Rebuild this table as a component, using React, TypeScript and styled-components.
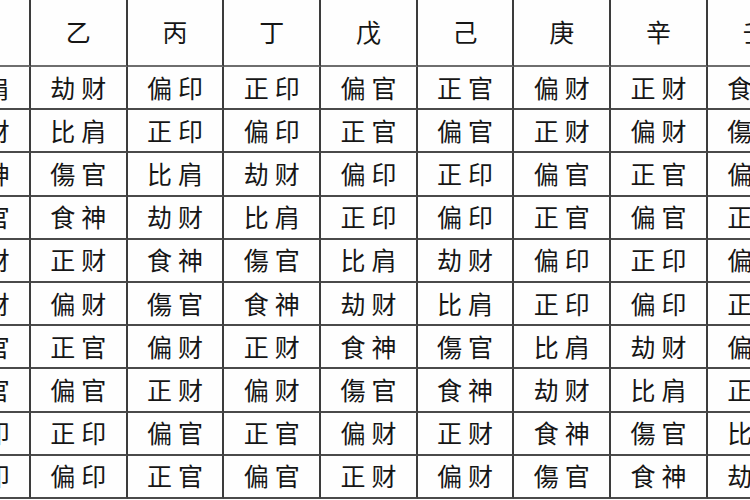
import * as React from "react";
import styled, { createGlobalStyle } from "styled-components";

const stems = ["甲", "乙", "丙", "丁", "戊", "己", "庚", "辛", "壬", "癸"];

// rows: other stem, columns: day stem
const gods: string[][] = [
  ["比肩", "劫财", "偏印", "正印", "偏官", "正官", "偏财", "正财", "食神", "傷官"],
  ["劫财", "比肩", "正印", "偏印", "正官", "偏官", "正财", "偏财", "傷官", "食神"],
  ["食神", "傷官", "比肩", "劫财", "偏印", "正印", "偏官", "正官", "偏财", "正财"],
  ["傷官", "食神", "劫财", "比肩", "正印", "偏印", "正官", "偏官", "正财", "偏财"],
  ["偏财", "正财", "食神", "傷官", "比肩", "劫财", "偏印", "正印", "偏官", "正官"],
  ["正财", "偏财", "傷官", "食神", "劫财", "比肩", "正印", "偏印", "正官", "偏官"],
  ["偏官", "正官", "偏财", "正财", "食神", "傷官", "比肩", "劫财", "偏印", "正印"],
  ["正官", "偏官", "正财", "偏财", "傷官", "食神", "劫财", "比肩", "正印", "偏印"],
  ["偏印", "正印", "偏官", "正官", "偏财", "正财", "食神", "傷官", "比肩", "劫财"],
  ["正印", "偏印", "正官", "偏官", "正财", "偏财", "傷官", "食神", "劫财", "比肩"],
];

const GlobalStyle = createGlobalStyle`
  html, body {
    margin: 0;
    padding: 0;
    background: #ffffff;
  }
  body {
    width: 750px;
    height: 500px;
    overflow: hidden;
    font-family: "Noto Sans CJK SC", "Noto Sans CJK TC", sans-serif;
  }
`;

const Viewport = styled.div`
  width: 750px;
  height: 500px;
  overflow: hidden;
  background: #fefefe;
`;

const Grid = styled.div`
  display: grid;
  grid-template-columns: repeat(10, 96.7px);
  grid-template-rows: 67px repeat(10, 43.2px);
  margin-left: -65.7px;
  width: max-content;
`;

const Cell = styled.div<{ $head?: boolean }>`
  box-sizing: border-box;
  display: flex;
  align-items: center;
  justify-content: center;
  border-right: 2px solid #3c3c3c;
  border-bottom: 2px solid ${(p) => (p.$head ? "#6e6e6e" : "#4a4a4a")};
  color: #161616;
  font-size: 25px;
  font-weight: 400;
  letter-spacing: ${(p) => (p.$head ? "0" : "6px")};
  padding-left: ${(p) => (p.$head ? "0" : "6px")};
  padding-bottom: ${(p) => (p.$head ? "4px" : "2px")};
  white-space: nowrap;
`;

export default function App() {
  return (
    <Viewport>
      <GlobalStyle />
      <Grid>
        {stems.map((s) => (
          <Cell $head key={s}>
            {s}
          </Cell>
        ))}
        {gods.map((row, r) =>
          row.map((g, c) => <Cell key={`${r}-${c}`}>{g}</Cell>)
        )}
      </Grid>
    </Viewport>
  );
}
